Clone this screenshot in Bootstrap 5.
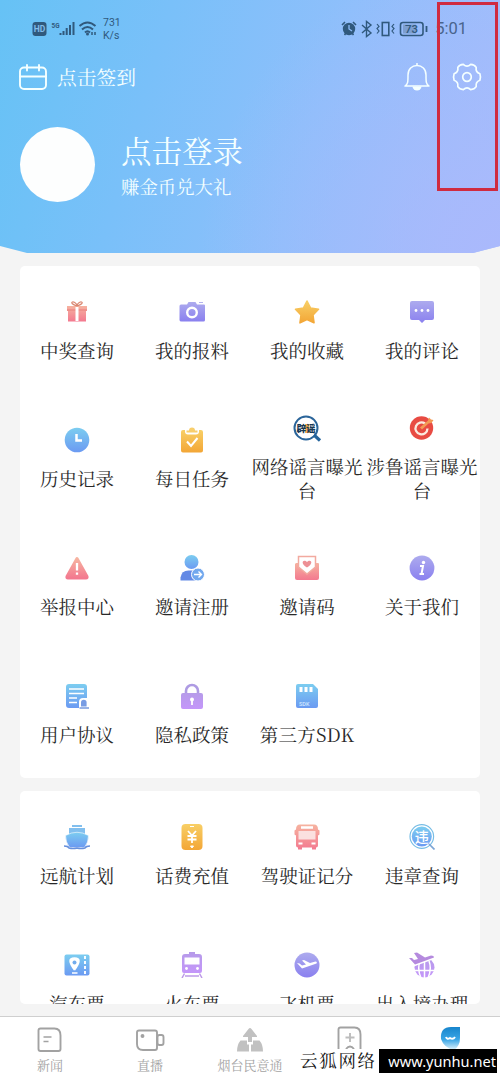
<!DOCTYPE html>
<html lang="zh-CN">
<head>
<meta charset="utf-8">
<meta name="viewport" content="width=device-width, initial-scale=1">
<title>我的</title>
<link href="https://cdn.jsdelivr.net/npm/bootstrap@5.3.0/dist/css/bootstrap.min.css" rel="stylesheet">
<style>
body{font-family:"Noto Serif CJK SC","Noto Sans CJK SC",serif;color:#333;background:#fff;font-weight:400}
.screen{height:1084px;overflow:hidden}
.scroller{height:1016px;background:#f4f4f4}
.hero{height:254px;flex:none;color:#f4ffff;background:radial-gradient(circle at 100% 100%,#aab9fc 0,rgba(170,185,252,.45) 130px,transparent 300px),linear-gradient(106deg,#66c2f5 0%,#79c0f9 30%,#8fbffb 62%,#a6bcfc 100%);clip-path:polygon(0 0,100% 0,100% 246px,473px 253px,27px 253px,0 246px)}
.status{height:56px;padding:17px 33px 0 31px;color:#30597d;font-family:Roboto,sans-serif}
.status svg,.tool svg,.ico,.tab svg{display:block;flex:none}
.rate{font-size:10.5px;line-height:12.5px;margin-left:6px}
.clock{font-size:16.5px;line-height:24px;color:#49648c;margin-left:7px}
.tool{height:42px;padding:0 18px 0 19px}
.sign{font-size:19.8px;line-height:28px;margin-left:10px}
.avatar{width:75px;height:75px;background:#fdfefe}
.login{font-size:30.5px;line-height:38px}
.sub{font-size:18.4px;line-height:28px;margin-top:3px}
.panel{width:460px;margin:0 auto;background:#fff;border-radius:5px;overflow:hidden;flex:none}
.cell{height:128px;padding-right:1px}
.ico{width:26px;height:26px;margin-bottom:13px}
.lbl{font-size:18.5px;line-height:24px;text-align:center;color:#292929;white-space:nowrap}
.tabs{height:68px;border-top:1px solid #cfcfcf;background:#fff}
.tab{padding-top:9px;color:#a3a3a3;font-size:13px;line-height:20px;width:20%}
.tab svg{width:30px;height:28px;margin-bottom:1px}
.frame{left:437px;top:2px;width:61px;height:189px;border:3px solid #cf2b40}
.mark-row{left:296px;top:1049px;height:25px;background:#fff;width:201px}
.mk{font-size:17.5px;line-height:22px;color:#111;width:83px;padding-left:4px;letter-spacing:1.7px;white-space:nowrap}
.url{width:118px;height:24px;padding-right:1px;background:#000;color:#fff;font:14.6px/25px "Noto Sans",sans-serif;text-align:right;white-space:nowrap}
</style>
</head>
<body>
<svg width="0" height="0" class="position-absolute" aria-hidden="true"><defs>
<linearGradient id="red" x2="0" y2="1"><stop stop-color="#f6b3a0"/><stop offset="1" stop-color="#f3798f"/></linearGradient>
<linearGradient id="pur" x2="0" y2="1"><stop stop-color="#adabee"/><stop offset="1" stop-color="#8a80ef"/></linearGradient>
<linearGradient id="yel" x2="0" y2="1"><stop stop-color="#f8cf66"/><stop offset="1" stop-color="#f3a636"/></linearGradient>
<linearGradient id="blu" x2="0" y2="1"><stop stop-color="#7ccdf0"/><stop offset="1" stop-color="#6b9af2"/></linearGradient>
<linearGradient id="vio" x2="0" y2="1"><stop stop-color="#b69be9"/><stop offset="1" stop-color="#c496fa"/></linearGradient>
<linearGradient id="fox" x2="0" y2="1"><stop stop-color="#1785cc"/><stop offset=".55" stop-color="#3aa6e6"/><stop offset="1" stop-color="#e5f5fd"/></linearGradient>
</defs></svg>
<div class="screen position-relative">
<main class="scroller d-flex flex-column">
<header class="hero">
 <div class="status d-flex align-items-start">
  <svg width="66" height="24" viewBox="0 0 66 24" fill="none" stroke="currentColor"><rect x="1.500" y="5" width="14" height="14" rx="3" fill="currentColor" stroke="none"/><text x="8.500" y="15.300" text-anchor="middle" font-size="8.500" font-weight="700" fill="#83bcea" stroke="none">HD</text><text x="20.500" y="10.500" font-size="7.500" font-weight="700" fill="currentColor" stroke="none" textLength="8" lengthAdjust="spacingAndGlyphs">5G</text><path d="M29.500 18v-2M32.500 18v-4M35.700 18V11M39 18V8M42.500 18V5" stroke-width="2"/><path d="M48.500 9q8-7 16 0M51 12.500q5.500-5 11 0M54 15.500q2.500-2.500 5 0" stroke-width="2"/><circle cx="56.500" cy="17" r="1.500" fill="currentColor" stroke="none"/><path d="M61 18v-3M64 15v3" stroke-width="1.500"/></svg>
  <div class="rate">731<br>K/s</div>
  <svg class="ms-auto" width="87" height="24" viewBox="342 17 87 24" fill="none" stroke="currentColor" stroke-width="1.600"><circle cx="353" cy="29" r="6.200" fill="currentColor" stroke="none"/><path d="M346 25l3-3M360 25l-3-3M348.500 35l1.500-2M357.500 35l-1.500-2"/><path d="M353 25v4l3 2" stroke="#8fbdf8" stroke-width="1.300"/><path d="M366 25l9 8-4.500 3.500V21.500L375 25l-9 8" stroke-width="1.400"/><rect x="386.300" y="22.500" width="6.500" height="13"/><path d="M381 24l2 2.500-2 2 2 2.500-2 2.500M398 24l-2 2.500 2 2-2 2.500 2 2.500" stroke-width="1.200"/><rect x="404.500" y="22.500" width="22.500" height="13" rx="2.500"/><path d="M407 24.500h13v9h-13z" fill="#7d9fd0" stroke="none"/><text x="415.500" y="33" text-anchor="middle" fill="currentColor" stroke="none" font-size="11.500" font-weight="500">73</text></svg>
  <svg width="3" height="24" viewBox="0 0 3 24"><path d="M1.500 9v6" stroke="currentColor" stroke-width="1.800"/></svg>
  <div class="clock">5:01</div>
 </div>
 <div class="tool d-flex align-items-center">
  <svg width="28" height="26" viewBox="0 0 28 26" fill="none" stroke="currentColor" stroke-width="1.900" stroke-linecap="round"><rect x="1" y="3.500" width="26" height="21.500" rx="4"/><path d="M1 12.500h26M8 1v5.500M20 1v5.500"/></svg>
  <div class="sign">点击签到</div>
  <svg class="ms-auto" width="26" height="28" viewBox="0 0 26 28" fill="none" stroke="currentColor" stroke-width="1.500" stroke-linejoin="round"><path d="M1 23h24c-3-2-3-4-3-11C22 6 18 2.500 13 2.500S4 6 4 12c0 7 0 9-3 11z"/><path d="M8.500 23.500a4.500 4 0 0 0 9 0z" fill="currentColor" stroke="none"/><path d="M13 0v3"/></svg>
  <svg style="margin-left:22px" width="30" height="28" viewBox="-15 -14 30 28" fill="none" stroke="currentColor" stroke-width="1.700" stroke-linejoin="round"><path d="M12.900-3.200Q14 0 12.900 3.200Q8.400 4.800 9.200 9.600Q7.500 12.300 3.700 12.600Q0 9 -3.700 12.600Q-7.500 12.300 -9.200 9.600Q-8.400 4.800 -12.900 3.200Q-14 0 -12.900-3.200Q-8.400-4.800 -9.200-9.600Q-7.500-12.300 -3.700-12.600Q0-9 3.700-12.600Q7.500-12.300 9.200-9.600Q8.400-4.800 12.900-3.200z"/><circle r="4.300"/></svg>
 </div>
 <div class="d-flex" style="padding:29px 0 0 20px">
  <div class="avatar rounded-circle"></div>
  <div style="margin:4px 0 0 26px"><div class="login">点击登录</div><div class="sub">赚金币兑大礼</div></div>
 </div>
</header>

<section class="panel" style="margin-top:12px;height:512px"><div class="row g-0">
 <div class="cell col-3 d-flex flex-column align-items-center justify-content-center"><svg class="ico" viewBox="0 0 26 26"><path d="M3 7h20v5H3zM4 11h18v11.500H4z" fill="url(#red)"/><path d="M13 7C3 4 10 0 13 6C16 0 23 4 13 7" fill="none" stroke="#d9856f" stroke-width="1.200"/><path d="M3 11h20" stroke="#e87f7c"/><path d="M13 8v14" stroke="#fff" stroke-width="3"/></svg><div class="lbl">中奖查询</div></div>
 <div class="cell col-3 d-flex flex-column align-items-center justify-content-center"><svg class="ico" viewBox="0 0 26 26"><path d="M2 5.500h6l1.500-2.500h7l1.500 2.500h7q1 0 1 1V21q0 1.500-1.500 1.500h-22Q.5 22.500.5 21V7q0-1.500 1.500-1.500" fill="url(#pur)"/><path d="M20 3.500h4" stroke="#b3b2ee"/><circle cx="13" cy="13.500" r="4.800" fill="none" stroke="#fff" stroke-width="2.400"/></svg><div class="lbl">我的报料</div></div>
 <div class="cell col-3 d-flex flex-column align-items-center justify-content-center"><svg class="ico" viewBox="0 0 26 26"><path d="M13 2l3.600 7 7.900 1.300-5.500 5.700 1 7.800-7-3.300-7 3.300 1-7.800L1.500 10.300 9.400 9z" fill="url(#yel)" stroke="url(#yel)" stroke-width="1.600" stroke-linejoin="round"/></svg><div class="lbl">我的收藏</div></div>
 <div class="cell col-3 d-flex flex-column align-items-center justify-content-center"><svg class="ico" viewBox="0 0 26 26"><path d="M3 2h20q2 0 2 2v15q0 2-2 2h-7l-3 3-3-3H3q-2 0-2-2V4q0-2 2-2" fill="url(#pur)"/><g fill="#fff"><circle cx="7" cy="11.500" r="1.400"/><circle cx="13" cy="11.500" r="1.400"/><circle cx="19" cy="11.500" r="1.400"/></g></svg><div class="lbl">我的评论</div></div>

 <div class="cell col-3 d-flex flex-column align-items-center justify-content-center"><svg class="ico" viewBox="0 0 26 26"><circle cx="13" cy="13" r="12.300" fill="url(#blu)"/><path d="M12.500 7v6.500H18" fill="none" stroke="#fff" stroke-width="2.500"/></svg><div class="lbl">历史记录</div></div>
 <div class="cell col-3 d-flex flex-column align-items-center justify-content-center"><svg class="ico" viewBox="0 0 26 26"><path d="M4 3h2v1.500q0 3 3 3h8q3 0 3-3V3h2q2 0 2 2v18.500q0 2-2 2H4q-2 0-2-2V5q0-2 2-2" fill="url(#yel)"/><path d="M7.500 5.500V3.500h2.500a3 3 0 0 1 6 0h2.500v2z" fill="#f8ce6c"/><path d="M8 14.500l4 4.500 6.500-8" fill="none" stroke="#fff" stroke-width="2"/></svg><div class="lbl">每日任务</div></div>
 <div class="cell col-3 d-flex flex-column align-items-center justify-content-center"><svg class="ico overflow-visible" viewBox="0 0 26 26"><circle cx="12" cy="13" r="11.500" fill="none" stroke="#2b659a" stroke-width="2"/><path d="M20 20l6 5.500" stroke="#24649c" stroke-width="3.200"/><rect x="11" y="9" width="4" height="9" fill="#f3ad4e"/><text x="12" y="17" font-size="9.500" font-weight="900" text-anchor="middle" fill="#173853" font-family="Noto Sans CJK SC">辟谣</text></svg><div class="lbl">网络谣言曝光<br>台</div></div>
 <div class="cell col-3 d-flex flex-column align-items-center justify-content-center"><svg class="ico" viewBox="0 0 26 26"><circle cx="12.500" cy="13" r="11.700" fill="#e84b43"/><path d="M16 8.500a6 6 0 1 0 2.500 5" fill="none" stroke="#fbe9df" stroke-width="2.300"/><path d="M13 14.500l-2-2L19 5.500l1-3 2 2 2.500.500-2 3-3 .500z" fill="#f39a55"/></svg><div class="lbl">涉鲁谣言曝光<br>台</div></div>

 <div class="cell col-3 d-flex flex-column align-items-center justify-content-center"><svg class="ico" viewBox="0 0 26 26"><path d="M13 3.500L23 21.500q.5 1.500-1 1.500H4q-1.500 0-1-1.500z" fill="url(#red)" stroke="url(#red)" stroke-width="3" stroke-linejoin="round"/><path d="M13 8v7.500M13 17.500v2.300" stroke="#fff" stroke-width="2.300"/></svg><div class="lbl">举报中心</div></div>
 <div class="cell col-3 d-flex flex-column align-items-center justify-content-center"><svg class="ico" viewBox="0 0 26 26"><circle cx="12.500" cy="7" r="7" fill="url(#blu)"/><path d="M1.500 25.500v-3q1-7 8-7h8v10z" fill="#6389e5"/><circle cx="19" cy="19.500" r="6.500" fill="#72a8ee" stroke="#fff"/><path d="M15 19.500h7.500M19.500 16.500l3 3-3 3" fill="none" stroke="#fff" stroke-width="1.400"/></svg><div class="lbl">邀请注册</div></div>
 <div class="cell col-3 d-flex flex-column align-items-center justify-content-center"><svg class="ico" viewBox="0 0 26 26"><path d="M2 8h22q1 0 1 1v14q0 2-2 2H3q-2 0-2-2V9z" fill="url(#red)"/><path d="M4.500 1.500h17V12L13 19l-8.500-7z" fill="#fff" stroke="#f2aaa0" stroke-width="1.500"/><path d="M13 12.500C5 7.500 10 3.500 13 7C16 3.500 21 7.500 13 12.500" fill="#ed9095"/></svg><div class="lbl">邀请码</div></div>
 <div class="cell col-3 d-flex flex-column align-items-center justify-content-center"><svg class="ico" viewBox="0 0 26 26"><circle cx="13" cy="13" r="12.400" fill="url(#pur)"/><circle cx="14.500" cy="7.500" r="1.700" fill="#fff"/><path d="M11 11h3l-1.500 8H15M10.500 19h2" fill="none" stroke="#fff" stroke-width="2"/></svg><div class="lbl">关于我们</div></div>

 <div class="cell col-3 d-flex flex-column align-items-center justify-content-center"><svg class="ico" viewBox="0 0 26 26"><rect x="2" y="1" width="21" height="24" rx="3" fill="url(#blu)"/><path d="M5 6h15M5 10.500h15M5 15h8M5 19.500h8" stroke="#fff" stroke-width="1.700"/><path d="M15 26v-7q0-4 4-4h6v11z" fill="#fff"/><path d="M17 23.500v-4a2.800 2.800 0 0 1 5.600 0v4z" fill="#779ce4"/><path d="M15.500 25H25" stroke="#6e93dc" stroke-width="1.400"/></svg><div class="lbl">用户协议</div></div>
 <div class="cell col-3 d-flex flex-column align-items-center justify-content-center"><svg class="ico" viewBox="0 0 26 26"><path d="M7 12V8a6 6 0 0 1 12 0v4" fill="none" stroke="#ae9be3" stroke-width="2.600"/><rect x="2" y="10" width="22" height="16" rx="2" fill="url(#vio)"/><circle cx="13" cy="16.500" r="2" fill="#fff"/><path d="M13 17v5" stroke="#fff" stroke-width="1.800"/></svg><div class="lbl">隐私政策</div></div>
 <div class="cell col-3 d-flex flex-column align-items-center justify-content-center"><svg class="ico" viewBox="0 0 26 26"><path d="M4 1h15l5 5v17q0 2-2 2H4q-2 0-2-2V3q0-2 2-2" fill="url(#blu)"/><path d="M7 4v5M12 4v5M17 4v5" stroke="#fff" stroke-width="3"/><text x="5" y="23" font-size="5.500" font-weight="500" font-family="Roboto" fill="#d3e9ff">SDK</text></svg><div class="lbl" style="letter-spacing:.2px">第三方SDK</div></div>
</div></section>

<section class="panel" style="margin-top:13px;height:213px"><div class="row g-0">
 <div class="cell col-3 d-flex flex-column align-items-center justify-content-center"><svg class="ico" viewBox="0 0 26 26"><path d="M8 1h10v2H8zM5 4h16v6.500H5z" fill="#82bfee"/><path d="M1.500 11.500Q13 5 24.500 11.500q0 7-4 12h-15Q1.500 18 1.500 11.500" fill="url(#blu)" stroke="#fff" stroke-width=".600"/><path d="M0 22q4 0 5 2 4 1 8 0 4 1 8 0 1-2 5-2" fill="none" stroke="#6790dc" stroke-width="1.600"/></svg><div class="lbl">远航计划</div></div>
 <div class="cell col-3 d-flex flex-column align-items-center justify-content-center"><svg class="ico" viewBox="0 0 26 26"><rect x="2.500" y="0" width="21" height="26" rx="4" fill="url(#yel)"/><path d="M9 7l4 4.500L17 7M8.500 12h9M8.500 15.500h9M13 11v8" fill="none" stroke="#fff" stroke-width="1.800"/><path d="M11 2.500h4M11.500 22l1.500 2 1.500-2z" stroke="#fff" fill="#fff"/></svg><div class="lbl">话费充值</div></div>
 <div class="cell col-3 d-flex flex-column align-items-center justify-content-center"><svg class="ico" viewBox="0 0 26 26"><path d="M6 .500h14q4 0 4 5l1.500 1v4l-1.500 1v10q0 2-2 2v2h-4v-2H8v2H4v-2q-2 0-2-2v-10L.500 10.500v-4l1.500-1q0-5 4-5" fill="url(#red)"/><path d="M7 3.500h12" stroke="#fff" stroke-width="2.500"/><path d="M4.500 7h17v8.500h-17z" fill="#fbe0df"/><path d="M4.500 19.500h4M17.500 19.500h4" stroke="#fff" stroke-width="2"/></svg><div class="lbl">驾驶证记分</div></div>
 <div class="cell col-3 d-flex flex-column align-items-center justify-content-center"><svg class="ico" viewBox="0 0 26 26"><circle cx="12.800" cy="12.500" r="11.800" fill="#fff" stroke="#78bde5" stroke-width="1.200"/><circle cx="12.800" cy="12.500" r="10" fill="url(#blu)"/><path d="M20 20l5.500 5.500" stroke="#7ca5d5" stroke-width="1.700"/><text x="12.800" y="17.500" font-size="14" font-weight="500" text-anchor="middle" fill="#fff" font-family="Noto Sans CJK SC">违</text></svg><div class="lbl">违章查询</div></div>

 <div class="cell col-3 d-flex flex-column align-items-center justify-content-center"><svg class="ico" viewBox="0 0 26 26"><rect x=".500" y="2.500" width="25" height="21" rx="2" fill="url(#blu)"/><path d="M10.500 18Q1.500 6 10.500 6T10.500 18M8 21h5.500" fill="#fff" stroke="#fff" stroke-width="1.500"/><circle cx="10.500" cy="10.500" r="2" fill="#72aced"/><path d="M21 4v19" stroke="#fff" stroke-width="1.900" stroke-dasharray="3 2"/></svg><div class="lbl">汽车票</div></div>
 <div class="cell col-3 d-flex flex-column align-items-center justify-content-center"><svg class="ico" viewBox="0 0 26 26"><path d="M10 2V0h6v2h4q3 0 3 3v14q0 2-2 2H5q-2 0-2-2V5q0-3 3-3z" fill="url(#vio)"/><path d="M5.500 5.500h15v7h-15z" fill="#fff"/><circle cx="7.500" cy="16.500" r="1.400" fill="#fff"/><circle cx="18.500" cy="16.500" r="1.400" fill="#fff"/><path d="M5.500 21.500L3 26M20.500 21.500L23 26M6 24h14" stroke="#bd9ae8" stroke-width="1.500"/></svg><div class="lbl">火车票</div></div>
 <div class="cell col-3 d-flex flex-column align-items-center justify-content-center"><svg class="ico" viewBox="0 0 26 26"><circle cx="13" cy="13" r="12.500" fill="url(#pur)"/><path d="M3 11l2.500.500 2.500 2 4-1-4-4 2-.500 6 3 5.500-1.500q2 0 1 2L8 16.500z" fill="#fff"/></svg><div class="lbl">飞机票</div></div>
 <div class="cell col-3 d-flex flex-column align-items-center justify-content-center"><svg class="ico" viewBox="0 0 26 26" fill="#b58ade"><circle cx="15.500" cy="15.500" r="10" fill="url(#vio)"/><path d="M5 18.500h21M15.500 8v18M11 9q-3 8 1 17M20 9q3 8-1 17" fill="none" stroke="#fff" stroke-width="1.500"/><path d="M0 6l3 0 2 2 4-1-4-6 3-.500 8 5 6-2q3 0 3 2L6 12.500z" stroke="#fff" stroke-width="3" paint-order="stroke"/></svg><div class="lbl">出入境办理</div></div>
</div></section>
</main>
<nav class="tabs d-flex">
 <div class="tab d-flex flex-column align-items-center"><svg viewBox="0 0 30 28" fill="none" stroke="#a2a2a2" stroke-width="1.900"><path d="M5.500 2.500h14q6 0 6 7V23q0 2-2 2h-18q-2 0-2-2V4.500q0-2 2-2z"/><path d="M8.500 11h8M8.500 15.500h5" stroke-width="1.400"/></svg>新闻</div>
 <div class="tab d-flex flex-column align-items-center"><svg viewBox="0 0 30 28" fill="none" stroke="#a2a2a2" stroke-width="1.900"><path d="M4 4.500h16q2 0 2 2V22q0 2-2 2H8q-6 0-6-6V6.500q0-2 2-2z"/><rect x="22.500" y="9" width="6" height="10" rx="2"/><circle cx="7.500" cy="10" r="1" fill="#a2a2a2"/></svg>直播</div>
 <div class="tab d-flex flex-column align-items-center"><svg viewBox="0 0 30 28" fill="#c1c1c1"><path d="M8 10L13.500 3q1.500-2 3 0L22 10v1h-5v5h-4v-5H8z"/><path d="M5.500 14.500H12v4h2v7H2q0-7 3.500-11M18 14.500h6.500q3.500 4 3.500 11H16v-7h2z"/></svg>烟台民意通</div>
 <div class="tab d-flex flex-column align-items-center"><svg viewBox="0 0 30 28" fill="none" stroke="#a2a2a2" stroke-width="1.900"><path d="M5.500 1.500h14q6 0 6 7V24q0 2-2 2h-18q-2 0-2-2V3.500q0-2 2-2z"/><path d="M15 7v9M10.500 11.500h9" stroke="#bdbdbd"/><path d="M11 23q4-5 8 0" /></svg></div>
 <div class="tab d-flex flex-column align-items-center"><svg viewBox="0 0 30 28"><path d="M6 13Q5 1 16 1h9v11q0 8-6 12-10-2-13-11" fill="url(#fox)"/><path d="M11 11q1 3 4 1 3 2 5-1" fill="none" stroke="#fff" stroke-width="2"/></svg></div>
</nav>
<div class="frame position-absolute"></div>
<div class="mark-row position-absolute d-flex"><div class="mk">云狐网络</div><div class="url">www.yunhu.net</div></div>
</div>
<script src="https://cdn.jsdelivr.net/npm/bootstrap@5.3.0/dist/js/bootstrap.bundle.min.js"></script>
</body>
</html>
